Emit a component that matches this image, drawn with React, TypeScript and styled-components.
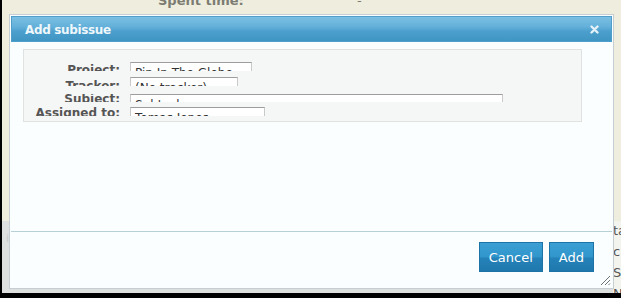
import styled, { createGlobalStyle } from 'styled-components';

const GlobalStyle = createGlobalStyle`
  html, body {
    margin: 0;
    padding: 0;
    background: #000;
  }
  * {
    box-sizing: border-box;
  }
`;

interface FieldRow {
  label: string;
  value: string;
  width: number;
  clip: number;
  gap: number;
  labelShift: number;
}

const rows: FieldRow[] = [
  { label: 'Project:', value: 'Pin In The Globe', width: 122, clip: 9, gap: 0, labelShift: 1 },
  { label: 'Tracker:', value: '(No tracker)', width: 108, clip: 9, gap: 6, labelShift: 2 },
  { label: 'Subject:', value: 'Subtask', width: 373, clip: 8, gap: 8, labelShift: -2 },
  { label: 'Assigned to:', value: 'Tomas Jones', width: 135, clip: 9, gap: 5, labelShift: -1 },
];

// page text peeking out to the right of the dialog
const sideLines = ['ta', 'c', 'S', 'N'];

const App = () => {
  return (
    <>
      <GlobalStyle />
      <Frame>
        <Page>
          <PageTop>
            <SpentLabel>Spent time:</SpentLabel>
            <SpentValue>-</SpentValue>
          </PageTop>
          <PageRule />
          <PageLower>
            <SideBox>
              <LowerText>is</LowerText>
            </SideBox>
            <SideText>
              {sideLines.map((t) => (
                <SideLine key={t}>{t}</SideLine>
              ))}
            </SideText>
          </PageLower>

          <Dialog>
            <TitleBar>
              <Title>Add subissue</Title>
              <CloseButton aria-label="close">
                <svg width="9" height="9" viewBox="0 0 9 9">
                  <path d="M1.5 1.5 L7.5 7.5 M7.5 1.5 L1.5 7.5" stroke="#e4f1f8" strokeWidth="2.4" strokeLinecap="round" />
                </svg>
              </CloseButton>
            </TitleBar>

            <Body>
              <Box>
                {rows.map((row) => (
                  <Row key={row.label} $clip={row.clip} $gap={row.gap}>
                    <Label $shift={row.labelShift}>{row.label}</Label>
                    <Field $width={row.width}>{row.value}</Field>
                  </Row>
                ))}
              </Box>
            </Body>

            <Footer>
              <Button>Cancel</Button>
              <Button>Add</Button>
            </Footer>

            <Grip>
              <svg width="12" height="12" viewBox="0 0 12 12">
                <path d="M11 2 L2 11 M11 6 L6 11 M11 9.5 L9.5 11" stroke="#6d7478" strokeWidth="1" />
                <path d="M11.5 3 L3 11.5 M11.5 7 L7 11.5" stroke="#ffffff" strokeWidth="1" />
              </svg>
            </Grip>
          </Dialog>
        </Page>
      </Frame>
    </>
  );
};

export default App;

const Frame = styled.div`
  width: 621px;
  height: 298px;
  padding: 0 0 5px 2px;
  background: #000;
  display: flex;
`;

const Page = styled.div`
  position: relative;
  flex: 1;
  display: flex;
  flex-direction: column;
  background: #efeede;
  overflow: hidden;
  font-family: 'DejaVu Sans', Verdana, sans-serif;
`;

const PageTop = styled.div`
  display: flex;
  height: 14px;
  padding-left: 156px;
  margin-top: -7px;
  font-size: 13px;
  line-height: 16px;
  color: #7c7c72;
`;

const SpentLabel = styled.span`
  font-weight: bold;
  width: 199px;
`;

const SpentValue = styled.span``;

const PageRule = styled.div`
  height: 1px;
  margin-top: 53px;
  background: #b4b4aa;
`;

const PageLower = styled.div`
  flex: 1;
  display: flex;
  margin-top: 161px;
`;

const SideBox = styled.div`
  flex: 1;
  background: #dedfdf;
  padding: 6px 0 0 4px;
`;

const LowerText = styled.span`
  font-size: 11px;
  color: #c6c9cc;
`;

const SideText = styled.div`
  width: 8px;
  padding-top: 2px;
  background: #f4f4ee;
  overflow: hidden;
`;

const SideLine = styled.div`
  height: 21px;
  font-size: 13px;
  line-height: 16px;
  color: #555;
  white-space: nowrap;
`;

const Dialog = styled.div`
  position: absolute;
  left: 7px;
  top: 14px;
  width: 605px;
  height: 275px;
  border: 1px solid #c6ced3;
  padding: 1px;
  background: #fbfefe;
  display: flex;
  flex-direction: column;
`;

const TitleBar = styled.div`
  height: 26px;
  display: flex;
  align-items: center;
  justify-content: space-between;
  padding: 0 12px 0 13px;
  border: 1px solid #4f9fca;
  background: linear-gradient(to bottom, #7cbfe2 0%, #63b0da 40%, #4c9fcc 60%, #3f95c3 100%);
`;

const Title = styled.span`
  font-size: 12px;
  font-weight: bold;
  letter-spacing: -0.35px;
  color: #eef7fb;
  padding-top: 1px;
`;

const CloseButton = styled.span`
  display: flex;
  width: 9px;
  height: 9px;
`;

const Body = styled.div`
  height: 190px;
  padding: 7px 0 0 12px;
  border-bottom: 1px solid #b7cfd6;
`;

const Box = styled.div`
  width: 559px;
  height: 73px;
  padding: 12px 0 0 0;
  border: 1px solid #e0e2e2;
  background: #f5f6f6;
`;

const Row = styled.div<{ $clip: number; $gap: number }>`
  display: flex;
  align-items: flex-start;
  height: ${(p) => p.$clip}px;
  margin-top: ${(p) => p.$gap}px;
  overflow: hidden;
`;

const Label = styled.span<{ $shift: number }>`
  width: 96px;
  margin-top: ${(p) => p.$shift}px;
  margin-right: 10px;
  text-align: right;
  font-size: 12px;
  font-weight: bold;
  line-height: 14px;
  color: #555;
  white-space: nowrap;
`;

const Field = styled.span<{ $width: number }>`
  width: ${(p) => p.$width}px;
  height: 18px;
  padding: 3px 4px 0;
  border: 1px solid #c9c9c9;
  border-top-color: #9d9d9d;
  background: #fff;
  font-size: 12px;
  line-height: 14px;
  color: #333;
  white-space: nowrap;
  overflow: hidden;
`;

const Footer = styled.div`
  flex: 1;
  display: flex;
  justify-content: flex-end;
  align-items: flex-start;
  gap: 6px;
  padding: 10px 18px 0 0;
`;

const Button = styled.button`
  height: 30px;
  padding: 0 9px;
  border: 1px solid #1d73a6;
  background: linear-gradient(to bottom, #3b9fd3 0%, #3196cc 48%, #2482b8 55%, #1f78ad 100%);
  color: #fff;
  font-family: 'DejaVu Sans', Verdana, sans-serif;
  font-size: 13px;
  cursor: pointer;
`;

const Grip = styled.div`
  position: absolute;
  right: 2px;
  bottom: 2px;
  width: 12px;
  height: 12px;
  display: flex;
`;
